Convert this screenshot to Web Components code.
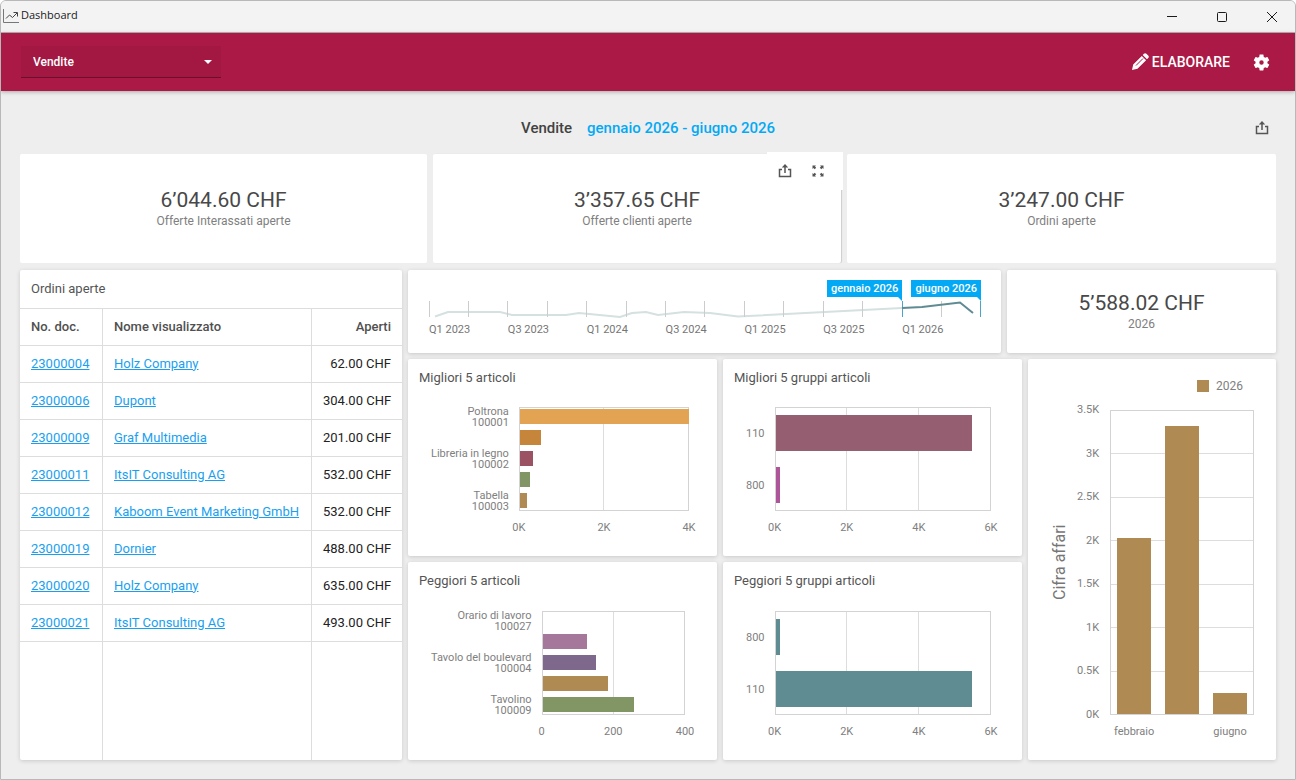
<!DOCTYPE html>
<html lang="it">
<head>
<meta charset="utf-8">
<title>Dashboard</title>
<style>
html {
  background: #fff;
}
body {
  margin: 0;
  min-height: 100vh;
  display: flex;
  font-family: Roboto, "Liberation Sans", sans-serif;
  font-size: 13px;
  color: #333;
}
app-window {
  flex: 1;
}
.kpis {
  display: grid;
  grid-template-columns: 407fr 408fr 429fr;
  grid-auto-rows: 109px;
  gap: 6px;
}
.board {
  flex: 1;
  display: grid;
  grid-template-columns: 382fr 868fr;
  gap: 6px;
}
.right {
  display: grid;
  grid-template-rows: 83px 1fr;
  gap: 6px;
}
.top {
  display: grid;
  grid-template-columns: 593fr 269fr;
  gap: 6px;
}
.charts {
  display: grid;
  grid-template-columns: 309fr 299fr 248fr;
  grid-template-rows: 197fr 198fr;
  gap: 6px;
}
.tall {
  grid-column: 3;
  grid-row: 1 / 3;
}
</style>
</head>
<body>
<app-window caption="Dashboard">
  <app-bar></app-bar>
  <dash-page name="Vendite" period="gennaio 2026 - giugno 2026">
    <div class="kpis">
      <kpi-card flat value="6’044.60 CHF">Offerte Interassati aperte</kpi-card>
      <kpi-card flat tools value="3’357.65 CHF">Offerte clienti aperte</kpi-card>
      <kpi-card flat value="3’247.00 CHF">Ordini aperte</kpi-card>
    </div>
    <div class="board">
      <order-table caption="Ordini aperte"></order-table>
      <div class="right">
        <div class="top">
          <range-selector></range-selector>
          <kpi-card value="5’588.02 CHF">2026</kpi-card>
        </div>
        <div class="charts">
          <bar-chart data="topItems">Migliori 5 articoli</bar-chart>
          <bar-chart data="topGroups">Migliori 5 gruppi articoli</bar-chart>
          <column-chart class="tall" caption="Cifra affari" legend="2026"></column-chart>
          <bar-chart data="lowItems">Peggiori 5 articoli</bar-chart>
          <bar-chart data="lowGroups">Peggiori 5 gruppi articoli</bar-chart>
        </div>
      </div>
    </div>
  </dash-page>
</app-window>

<script>
"use strict";
const ICONS = {
  chart: [16, `<path d="M.5 0v13.5H16" fill="none" stroke="#777"/>
    <path d="M3 9.5L6.5 6l3 2.500L14 4M10.500 3.500h4v4" fill="none" stroke="#444"/>`],
  min: [10, `<path d="M0 4.500h10" stroke="currentColor"/>`],
  max: [10, `<rect x=".5" y=".5" width="9" height="9" rx="1" fill="none" stroke="currentColor"/>`],
  close: [10, `<path d="M0 0l10 10M10 0L0 10" stroke="currentColor"/>`],
  arrow: [8, `<path d="M0 2h8L4 6z" fill="currentColor"/>`],
  pencil: [18, `<path d="M1 17l1.200-5.500L10.800 2.900l4.300 4.300L6.500 15.800zM11.700 2l1.200-1.200a1.800 1.800 0 012.500 0l1.800 1.800a1.800 1.800 0 010 2.500L16 6.300z" fill="currentColor"/>
    <path d="M5 12.500l7-7" stroke="#ab1a46" fill="none"/>`],
  gear: [24, `<path fill="currentColor" fill-rule="evenodd" d="M19.430 12.980c.04-.32.070-.64.070-.98s-.03-.66-.07-.98l2.110-1.650c.19-.15.240-.42.120-.64l-2-3.460c-.12-.22-.39-.3-.61-.22l-2.490 1c-.52-.4-1.080-.73-1.690-.98l-.38-2.650C14.460 2.180 14.250 2 14 2h-4c-.25 0-.46.180-.49.420l-.38 2.650c-.61.250-1.170.590-1.690.98l-2.490-1c-.23-.09-.49 0-.61.220l-2 3.460c-.13.220-.07.490.120.640l2.110 1.650c-.04.320-.07.650-.07.980s.03.660.070.980l-2.110 1.650c-.19.150-.24.420-.12.640l2 3.460c.120.220.390.300.610.220l2.490-1c.52.400 1.080.730 1.690.980l.38 2.650c.03.240.240.420.490.420h4c.25 0 .46-.18.490-.42l.38-2.650c.61-.25 1.170-.59 1.690-.98l2.490 1c.23.090.490 0 .61-.22l2-3.460c.12-.22.070-.49-.12-.64zM12 14.800a2.800 2.800 0 110-5.600 2.800 2.800 0 010 5.600z"/>`],
  share: [14, `<path d="M4 5.500H1.500v7h11v-7H10M7 9V2" fill="none" stroke="#555" stroke-width="1.500"/>
    <path d="M3.800 3.500L7 0l3.200 3.500z" fill="#555"/>`],
  expand: [12, `<g fill="#555"><path d="M.5.5H4L3 1.500l1.200 1.200-1.500 1.500L1.500 3l-1 1z"/>
    <path d="M11.500.5V4l-1-1-1.200 1.200-1.500-1.500L9 1.500l-1-1z"/>
    <path d="M11.500 11.500H8l1-1-1.200-1.200 1.500-1.500L10.500 9l1-1z"/>
    <path d="M.5 11.500V8l1 1 1.200-1.200 1.500 1.500L3 10.500l1 1z"/></g>`],
}
const BASE = `
* { box-sizing: border-box; }
button {
  border: 0;
  padding: 0;
  background: none;
  color: inherit;
  font: inherit;
  cursor: pointer;
  display: flex;
  align-items: center;
  justify-content: center;
}
svg { display: block; }`
const CARD = `
:host {
  background: #fff;
  border-radius: 2px;
  box-shadow: 0 1px 4px rgba(0,0,0,.16);
  min-width: 0;
}`
const DATA = {
  topItems: {max: 4000, ticks: ['0K', '2K', '4K'], pad: '1px 0 2px', gap: 6, right: 28, bars: [
    ['Poltrona<br>100001', 4000, '#e2a453'], ['', 500, '#c5853b'],
    ['Libreria in legno<br>100002', 310, '#9b5262'], ['', 240, '#829565'],
    ['Tabella<br>100003', 167, '#af8a53']]},
  topGroups: {max: 6000, ticks: ['0K', '2K', '4K', '6K'], pad: '7px 0', gap: 16, right: 31, bars: [
    ['110', 5470, '#955f71'], ['800', 112, '#ae5599']]},
  lowItems: {max: 400, ticks: ['0', '200', '400'], pad: '1px 0 2px', gap: 6, right: 32, bars: [
    ['Orario di lavoro<br>100027', 0, '#a5779a'], ['', 124, '#a5779a'],
    ['Tavolo del boulevard<br>100004', 149, '#7e688c'], ['', 183, '#af8a53'],
    ['Tavolino<br>100009', 256, '#829565']]},
  lowGroups: {max: 6000, ticks: ['0K', '2K', '4K', '6K'], pad: '7px 0', gap: 16, right: 31, bars: [
    ['800', 112, '#5f8b92'], ['110', 5470, '#5f8b92']]},
}
const ORDERS = [
  ['23000004', 'Holz Company', '62.00'],
  ['23000006', 'Dupont', '304.00'],
  ['23000009', 'Graf Multimedia', '201.00'],
  ['23000011', 'ItsIT Consulting AG', '532.00'],
  ['23000012', 'Kaboom Event Marketing GmbH', '532.00'],
  ['23000019', 'Dornier', '488.00'],
  ['23000020', 'Holz Company', '635.00'],
  ['23000021', 'ItsIT Consulting AG', '493.00'],
]

function icon(name, size) {
  let [box, body] = ICONS[name]
  size = size || box
  return `<svg width="${size}" height="${size}" viewBox="0 0 ${box} ${box}" aria-hidden="true">${body}</svg>`
}
class Base extends HTMLElement {
  constructor() {
    super();
    let sr = this.attachShadow({mode: 'open'})
    sr.innerHTML = '<style>'+BASE+this.css()+'</style>'+this.html()
  }
  attr(name) { return this.getAttribute(name) || '' }
}

class AppWindow extends Base {
  css() { return `
:host {
  display: flex;
  flex-direction: column;
  background: #eee;
  border: 1px solid #b8b8b8;
  border-radius: 6px 6px 0 0;
  overflow: hidden;
}
header {
  display: flex;
  align-items: center;
  height: 32px;
  padding-left: 2px;
  gap: 2px;
  background: #f3f3f3;
  border-bottom: 1px solid #b4b4b4;
  color: #1a1a1a;
  font: 11px "Open Sans", "Noto Sans", sans-serif;
}
.name { flex: 1; line-height: 28px; align-self: flex-start; }
nav { display: flex; gap: 4px; }
button { width: 46px; height: 30px; }` }
  html() { return `<header>${icon('chart')}<span class="name">${this.attr('caption')}</span>
<nav><button aria-label="Riduci">${icon('min')}</button>
<button aria-label="Ingrandisci">${icon('max')}</button>
<button aria-label="Chiudi">${icon('close')}</button></nav></header><slot></slot>` }
}

class AppBar extends Base {
  css() { return `
:host {
  display: flex;
  align-items: center;
  height: 58px;
  padding: 0 24px 0 20px;
  background: #ab1a46;
  color: #fff;
  box-shadow: 0 1px 4px rgba(0,0,0,.3);
}
label { display: grid; width: 200px; align-items: center; }
label > * { grid-area: 1 / 1; }
label svg { justify-self: end; margin-right: 9px; pointer-events: none; }
select {
  appearance: none;
  height: 32px;
  padding: 0 12px;
  border: 0;
  border-bottom: 1px solid #6a0f2c;
  background: #a21843;
  color: #fff;
  font: 500 12px Roboto, sans-serif;
}
.edit { margin-left: auto; gap: 3px; font-size: 14px; font-weight: 500; }
.gear { margin-left: 22px; }` }
  html() { return `<label><select aria-label="Dashboard"><option>Vendite</option></select>${icon('arrow')}</label>
<button class="edit">${icon('pencil')}ELABORARE</button>
<button class="gear" aria-label="Impostazioni">${icon('gear', 19)}</button>` }
}

class DashPage extends Base {
  css() { return `
:host {
  flex: 1;
  display: flex;
  flex-direction: column;
  padding: 0 19px 19px;
}
.head {
  display: grid;
  grid-template-columns: 1fr auto 1fr;
  align-items: center;
  height: 63px;
  padding: 10px 7px 0 0;
}
h1 {
  grid-column: 2;
  margin: 0;
  padding-left: 7px;
  display: flex;
  gap: 15px;
  font-size: 15px;
  font-weight: 500;
  color: #424242;
}
h1 button { color: #03a9f4; }
.share { justify-self: end; }
.body {
  flex: 1;
  display: flex;
  flex-direction: column;
  gap: 7px;
}` }
  html() { return `<div class="head"><h1>${this.attr('name')} <button>${this.attr('period')}</button></h1>
<button class="share" aria-label="Esporta">${icon('share')}</button></div>
<div class="body"><slot></slot></div>` }
}

class KpiCard extends Base {
  css() { return CARD+`
:host {
  position: relative;
  display: flex;
  flex-direction: column;
  justify-content: center;
  padding-bottom: 2px;
  text-align: center;
}
:host([flat]) { box-shadow: none; }
:host([tools]) { box-shadow: 1px 0 1px rgba(0,0,0,.14); }
.value { font-size: 21px; line-height: 26px; color: #484848; }
.label { font-size: 12px; line-height: 16px; color: #808080; }
.tools {
  position: absolute;
  top: -2px;
  right: -2px;
  display: flex;
  justify-content: center;
  gap: 20px;
  width: 76px;
  height: 38px;
  padding-right: 8px;
  background: #fff;
}` }
  html() { return `<div class="value">${this.attr('value')}</div>
<div class="label"><slot></slot></div>`
    +(this.hasAttribute('tools') ? `<div class="tools"><button aria-label="Esporta">${icon('share')}</button>
<button aria-label="Ingrandisci">${icon('expand')}</button></div>` : '') }
}

class OrderTable extends Base {
  css() { return CARD+`
:host { display: flex; flex-direction: column; }
h2 {
  margin: 0;
  padding: 0 11px;
  font-size: 13px;
  font-weight: 400;
  line-height: 38px;
  color: #555;
}
table {
  flex: 1;
  width: 100%;
  border-collapse: separate;
  border-spacing: 0;
  table-layout: fixed;
}
th, td {
  height: 37px;
  padding: 0 11px 2px;
  border-top: 1px solid #ddd;
  text-align: left;
  font-weight: 400;
  white-space: nowrap;
  color: #222;
}
th { font-weight: 500; color: #505050; }
th + *, td + * { border-left: 1px solid #ddd; }
th:last-child, td:last-child { text-align: right; }
.doc { width: 82px; }
.sum { width: 91px; }
.rest td { height: auto; }
a { color: #1a9ff0; text-underline-offset: 1px; }` }
  html() {
    let rows = ''
    for (let [doc, name, sum] of ORDERS)
      rows += `<tr><td><a href="#${doc}">${doc}</a></td><td><a href="#${doc}">${name}</a></td><td>${sum} CHF</td></tr>\n`
    return `<h2>${this.attr('caption')}</h2>
<table><colgroup><col class="doc"><col><col class="sum"></colgroup>
<tr><th>No. doc.</th><th>Nome visualizzato</th><th>Aperti</th></tr>
${rows}<tr class="rest"><td></td><td></td><td></td></tr></table>` }
}

class RangeSelector extends Base {
  css() { return CARD+`
:host { display: block; padding: 10px 20px 0 21px; }
.flags, .labels { display: grid; grid-template-columns: repeat(14, 1fr); }
.flags { margin-bottom: 4px; }
.flag {
  position: relative;
  justify-self: end;
  padding: 0 4px;
  background: #03a9f4;
  color: #fff;
  font-size: 11px;
  font-weight: 500;
  line-height: 17px;
  white-space: nowrap;
}
.flag::after {
  content: "";
  position: absolute;
  top: 100%;
  right: 0;
  border: 2px solid transparent;
  border-top-color: #03a9f4;
  border-right-color: #03a9f4;
}
.from { grid-column: 1 / 13; }
.to { grid-column: 13 / 15; }
svg { width: 100%; height: 16px; overflow: visible; }
path { fill: none; stroke-width: 2; vector-effect: non-scaling-stroke; }
.tick { stroke: #ccc; stroke-width: 1; shape-rendering: crispEdges; }
.on { stroke: #4aa5c8; }
.labels { margin-top: 6px; }
.labels span {
  display: flex;
  justify-content: center;
  padding-right: 3px;
  white-space: nowrap;
  font-size: 11px;
  line-height: 14px;
  color: #767676;
}` }
  html() {
    let ticks = '', labels = ''
    for (let i = 0; i <= 14; i++) {
      let x = Math.floor(i*39.42) + .5
      ticks += `<path class="tick${i === 12 || i === 14 ? ' on' : ''}" d="M${x} 0v16"/>`
      if (i < 14)
        labels += '<span>'+(i%2 ? '' : `Q${i%4+1} ${2023+Math.floor(i/4)}`)+'</span>'
    }
    return `<div class="flags"><span class="flag from">gennaio 2026</span><span class="flag to">giugno 2026</span></div>
<svg viewBox="0 0 552 16" preserveAspectRatio="none">
<path stroke="#d5e0e1" d="M6 15.500L19 11h52l12 3h54l13-2 41 4 12-4 14-1 12 3 26-3 26 1 28 3.500L473 7"/>
${ticks}
<path stroke="#5f8b92" d="M473 7l20-1 38-4.500L544 12"/></svg>
<div class="labels">${labels}</div>` }
}

class BarChart extends Base {
  css() {
    let d = DATA[this.attr('data')]
    return CARD+`
:host {
  display: grid;
  grid-template-columns: auto 1fr;
  grid-template-rows: 1fr 104px 45px;
  padding: 0 ${d.right}px 0 23px;
}
h2 {
  grid-column: 1 / 3;
  margin: 0 0 0 -12px;
  font-size: 13px;
  font-weight: 400;
  line-height: 37px;
  color: #555;
}
.labels, .bars {
  display: flex;
  flex-direction: column;
  gap: ${d.gap}px;
  padding: ${d.pad};
  border: solid transparent;
  border-width: 1px 0;
}
.labels { padding-right: 10px; }
.labels div {
  flex: 1 1 0;
  min-height: 0;
  height: 0;
  display: flex;
  align-items: center;
  justify-content: flex-end;
  text-align: right;
  font-size: 11px;
  line-height: 11px;
  white-space: nowrap;
  color: #808080;
}
.plot { display: grid; }
.plot > * { grid-area: 1 / 1; }
.grid { display: flex; border: 1px solid #d3d3d3; }
.grid i { flex: 1; }
.grid i + i { border-left: 1px solid #ddd; }
.bars { margin-left: 1px; }
.bars i { flex: 1; }
.ticks {
  grid-column: 2;
  display: flex;
  justify-content: space-between;
  margin-top: 11px;
  font-size: 11px;
  line-height: 12px;
  color: #808080;
}
.ticks span { width: 0; display: flex; justify-content: center; }` }
  html() {
    let d = DATA[this.attr('data')]
    let labels = '', bars = ''
    for (let [name, value, color] of d.bars) {
      labels += `<div><span>${name}</span></div>`
      bars += `<i style="width:${value/d.max*100}%;background:${color}"></i>`
    }
    return `<h2><slot></slot></h2><div class="labels">${labels}</div>
<div class="plot"><div class="grid">${'<i></i>'.repeat(d.ticks.length-1)}</div><div class="bars">${bars}</div></div>
<div class="ticks">${d.ticks.map(t => '<span>'+t+'</span>').join('')}</div>` }
}

class ColumnChart extends Base {
  css() { return CARD+`
:host {
  display: grid;
  grid-template-columns: 16px auto 1fr;
  grid-template-rows: 51px 1fr 45px;
  padding: 0 22px 0 24px;
}
.legend {
  grid-column: 1 / 4;
  display: flex;
  justify-content: flex-end;
  gap: 7px;
  margin: 21px 11px 0 0;
  height: 12px;
  font-size: 12px;
  line-height: 12px;
  color: #808080;
}
.legend i { width: 12px; background: #af8a53; }
.name {
  writing-mode: vertical-rl;
  transform: rotate(180deg);
  text-align: center;
  font-size: 16px;
  line-height: 16px;
  color: #767676;
}
.scale, .ticks { font-size: 11px; line-height: 12px; color: #808080; }
.scale {
  display: flex;
  flex-direction: column;
  justify-content: space-between;
  align-items: flex-end;
  padding: 0 11px 0 9px;
}
.scale span { height: 0; display: flex; align-items: center; }
.plot { display: grid; }
.plot > * { grid-area: 1 / 1; }
.grid { display: flex; flex-direction: column; border: 1px solid #d3d3d3; }
.grid i { flex: 1; }
.grid i + i { border-top: 1px solid #ddd; }
.bars { display: flex; align-items: flex-end; margin-bottom: 1px; }
.bars i { flex: 1; margin: 0 7px; background: #af8a53; }
.ticks { grid-column: 3; display: flex; margin-top: 11px; }
.ticks span { flex: 1 1 0; display: flex; justify-content: center; }` }
  html() {
    let scale = ['3.5K', '3K', '2.5K', '2K', '1.5K', '1K', '0.5K', '0K']
    let bars = [['febbraio', 2026], ['', 3315], ['giugno', 242]]
    return `<div class="legend"><i></i>${this.attr('legend')}</div>
<div class="name">${this.attr('caption')}</div>
<div class="scale">${scale.map(s => '<span>'+s+'</span>').join('')}</div>
<div class="plot"><div class="grid">${'<i></i>'.repeat(7)}</div>
<div class="bars">${bars.map(b => `<i style="height:${b[1]/35}%"></i>`).join('')}</div></div>
<div class="ticks">${bars.map(b => '<span>'+b[0]+'</span>').join('')}</div>` }
}

customElements.define('kpi-card', KpiCard);
customElements.define('order-table', OrderTable);
customElements.define('range-selector', RangeSelector);
customElements.define('bar-chart', BarChart);
customElements.define('column-chart', ColumnChart);
customElements.define('dash-page', DashPage);
customElements.define('app-bar', AppBar);
customElements.define('app-window', AppWindow);
</script>
</body>
</html>
